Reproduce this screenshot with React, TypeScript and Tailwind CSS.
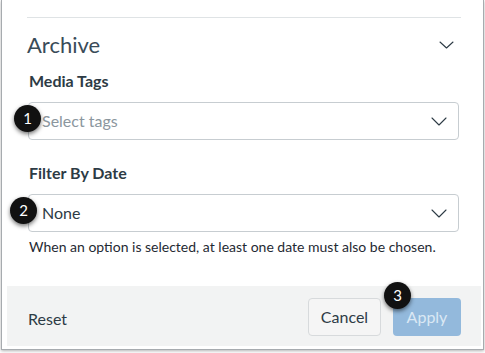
import React from "react";

const Chevron = ({ w = 16, h = 9 }: { w?: number; h?: number }) => (
	<svg width={w} height={h} viewBox={`0 0 ${w} ${h}`} fill="none">
		<path d={`M1 1 L${w / 2} ${h - 1} L${w - 1} 1`} stroke="#2d3b45" strokeWidth="1.1" strokeLinecap="round" strokeLinejoin="round" />
	</svg>
);

const Badge = ({ n, className }: { n: number; className: string }) => (
	<div
		className={`absolute flex h-[27px] w-[27px] items-center justify-center rounded-full bg-[#111] text-[15px] leading-none text-white shadow-[0_2px_4px_rgba(0,0,0,0.55)] ${className}`}
	>
		{n}
	</div>
);

const SelectBox = ({ text, placeholder, badge }: { text: string; placeholder?: boolean; badge: React.ReactNode }) => (
	<div className="relative flex h-[38px] items-center justify-between rounded-[4px] border border-[#c7cdd1] bg-white pl-[13px] pr-[11px]">
		<span className={`text-[16px] ${placeholder ? "text-[#8b969e]" : "text-[#2d3b45]"}`}>{text}</span>
		<Chevron />
		{badge}
	</div>
);

export default function App() {
	return (
		<div className="h-[353px] w-[485px] bg-white pl-px pr-px font-['Lato','Liberation_Sans',sans-serif]">
			<div className="flex h-[350px] flex-col border-x border-b border-[#a7abaf] shadow-[0_1px_3px_rgba(0,0,0,0.3)]">
				<div className="flex-1 pl-[25px] pr-[22px] pt-[17px] text-[#2d3b45]">
					<div className="h-px bg-[#dfe3e5]" />

					<div className="mt-[13px] flex items-center justify-between pr-[7px]">
						<h2 className="text-[22px] font-normal leading-[28px] text-[#394b58]">Archive</h2>
						<Chevron w={15} h={8} />
					</div>

					<div className="mt-[12px] pl-[2px] text-[16px] font-bold leading-[20px]">Media Tags</div>
					<div className="mr-[2px] mt-[11px] pl-px">
						<SelectBox text="Select tags" placeholder badge={<Badge n={1} className="-left-[15px] top-[2px]" />} />
					</div>

					<div className="mt-[23px] pl-[2px] text-[16px] font-bold leading-[20px]">Filter By Date</div>
					<div className="mr-[2px] mt-[11px] pl-px">
						<SelectBox text="None" badge={<Badge n={2} className="-left-[19px] top-[2px]" />} />
					</div>
					<p className="mt-[5px] pl-[2px] text-[14px] leading-[20px] text-[#1f2a33]">
						When an option is selected, at least one date must also be chosen.
					</p>
				</div>

				<div className="mb-[3px] ml-[5px] mr-[2px] flex h-[60px] items-start justify-between bg-[#f2f3f3] pl-[21px] pr-[20px] pt-[12px]">
					<span className="mt-[11px] text-[16px] leading-[20px] text-[#2d3b45]">Reset</span>
					<div className="flex gap-[12px]">
						<button className="h-[38px] w-[73px] rounded-[4px] border border-[#d7dadc] bg-[#f5f5f5] text-[16px] text-[#2d3b45]">
							Cancel
						</button>
						<div className="relative">
							<button className="h-[38px] w-[68px] rounded-[4px] bg-[#93b9dc] text-[16px] text-[#dbe8f4]">Apply</button>
							<Badge n={3} className="-left-[9px] -top-[16px]" />
						</div>
					</div>
				</div>
			</div>
		</div>
	);
}
